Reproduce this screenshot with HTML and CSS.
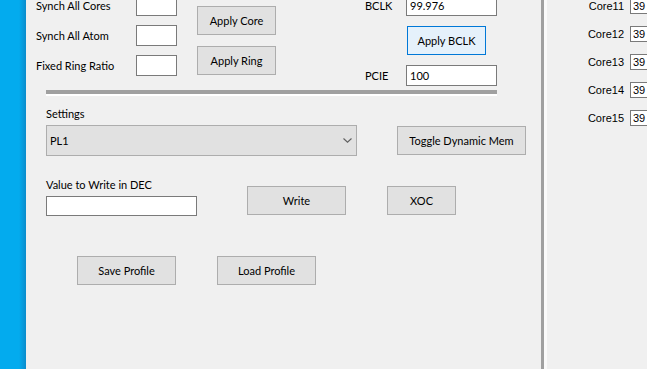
FILE: index.html
```html
<!DOCTYPE html>
<html>
<head>
<meta charset="utf-8">
<title>Tuning Panel</title>
<link rel="stylesheet" href="styles.css">
</head>
<body>
<div class="taskbar"></div>

<div class="main">
    <div class="top">
        <div class="fields">
            <div class="field"><span class="label">Synch All Cores</span><input class="box small"></div>
            <div class="field"><span class="label">Synch All Atom</span><input class="box small"></div>
            <div class="field"><span class="label">Fixed Ring Ratio</span><input class="box small"></div>
        </div>
        <div class="apply">
            <button class="btn apply-btn">Apply Core</button>
            <button class="btn apply-btn">Apply Ring</button>
        </div>
        <div class="clock">
            <div class="field"><span class="clock-label">BCLK</span><input class="box wide" value="99.976"></div>
            <button class="btn apply-btn focused">Apply BCLK</button>
            <div class="field"><span class="clock-label">PCIE</span><input class="box wide" value="100"></div>
        </div>
    </div>

    <div class="rule"></div>

    <div class="caption">Settings</div>
    <div class="settings-row">
        <div class="select">
            <span>PL1</span>
            <svg width="9" height="5" viewBox="0 0 9 5"><path d="M0.5 0.5 L4.5 4.2 L8.5 0.5" fill="none" stroke="#606060" stroke-width="1.1"/></svg>
        </div>
        <button class="btn toggle-btn">Toggle Dynamic Mem</button>
    </div>

    <div class="write-row">
        <div class="write-field">
            <div class="caption-inline">Value to Write in DEC</div>
            <input class="box value">
        </div>
        <button class="btn write-btn">Write</button>
        <button class="btn xoc-btn">XOC</button>
    </div>

    <div class="profile-row">
        <button class="btn profile-btn">Save Profile</button>
        <button class="btn profile-btn">Load Profile</button>
    </div>
</div>

<div class="divider"></div>

<div class="side">
    <div class="core"><span class="core-label">Core11</span><input class="core-box" value="39"></div>
    <div class="core"><span class="core-label">Core12</span><input class="core-box" value="39"></div>
    <div class="core"><span class="core-label">Core13</span><input class="core-box" value="39"></div>
    <div class="core"><span class="core-label">Core14</span><input class="core-box" value="39"></div>
    <div class="core"><span class="core-label">Core15</span><input class="core-box" value="39"></div>
</div>
</body>
</html>
```

FILE: styles.css
```css
body {
    margin: 0;
    padding: 0;
    width: 647px;
    height: 369px;
    overflow: hidden;
    display: flex;
    background-color: #f0f0f0;
    font-family: Lato, "Noto Sans", Arial, sans-serif;
    font-size: 11px;
    color: #000;
}
.taskbar {
    width: 26px;
    flex-shrink: 0;
    background: linear-gradient(to right, #03abee 0, #03abee 19px, #0b8ccc 26px);
}
.main {
    width: 515px;
    flex-shrink: 0;
    background-color: #f0f0f0;
}
.btn {
    box-sizing: border-box;
    height: 29px;
    padding: 0;
    background-color: #e1e1e1;
    border: 1px solid #adadad;
    font-family: inherit;
    font-size: 11px;
    color: #000;
}
.btn.focused {
    background-color: #e5f1fb;
    border-color: #0078d7;
}
.box {
    box-sizing: border-box;
    height: 21px;
    padding: 0 3px;
    border: 1px solid #7a7a7a;
    background: #fff;
    font-family: inherit;
    font-size: 11px;
}
.top {
    display: flex;
    margin-top: -5px;
    padding-left: 10px;
    height: 91px;
}
.fields {
    display: flex;
    flex-direction: column;
    gap: 9px;
}
.field {
    display: flex;
    align-items: center;
    height: 21px;
}
.label {
    width: 100px;
}
.small {
    width: 41px;
}
.apply {
    display: flex;
    flex-direction: column;
    gap: 11px;
    margin-left: 20px;
    padding-top: 11px;
}
.apply-btn {
    width: 79px;
}
.clock {
    display: flex;
    flex-direction: column;
    align-items: flex-start;
    gap: 10px;
    margin-left: 89px;
}
.clock-label {
    width: 41px;
}
.clock .apply-btn {
    margin-left: 42px;
}
.wide {
    width: 91px;
}
.rule {
    margin: 4px 0 0 20px;
    width: 451px;
    height: 4px;
    background-color: #a0a0a0;
    border-bottom: 2px solid #fff;
}
.caption {
    margin: 10px 0 0 20px;
    line-height: 16px;
}
.settings-row {
    display: flex;
    align-items: center;
    margin: 3px 0 0 20px;
}
.select {
    box-sizing: border-box;
    width: 311px;
    height: 31px;
    display: flex;
    align-items: center;
    justify-content: space-between;
    padding: 0 4px 0 3px;
    background-color: #e1e1e1;
    border: 1px solid #adadad;
}
.toggle-btn {
    width: 129px;
    margin-left: 40px;
}
.write-row {
    display: flex;
    align-items: flex-end;
    margin: 21px 0 0 20px;
}
.caption-inline {
    line-height: 16px;
    margin-bottom: 3px;
}
.value {
    width: 151px;
    height: 20px;
}
.write-btn {
    width: 99px;
    margin: 0 0 1px 50px;
}
.xoc-btn {
    width: 69px;
    margin: 0 0 1px 41px;
}
.profile-row {
    display: flex;
    gap: 41px;
    margin: 40px 0 0 51px;
}
.profile-btn {
    width: 99px;
}
.divider {
    width: 3px;
    flex-shrink: 0;
    background-color: #a0a0a0;
    border-right: 3px solid #fafafa;
}
.side {
    flex: 1;
    display: flex;
    flex-direction: column;
    gap: 12px;
    margin-top: -2px;
    font-family: "Liberation Sans", Arial, sans-serif;
    font-size: 11px;
}
.core {
    display: flex;
    align-items: center;
    height: 16px;
}
.core-label {
    width: 77px;
    text-align: right;
}
.core-box {
    box-sizing: border-box;
    width: 40px;
    height: 16px;
    margin-left: 6px;
    padding: 0 2px;
    border: 1px solid #7a7a7a;
    background: #fff;
    font-family: inherit;
    font-size: 11px;
}
```
